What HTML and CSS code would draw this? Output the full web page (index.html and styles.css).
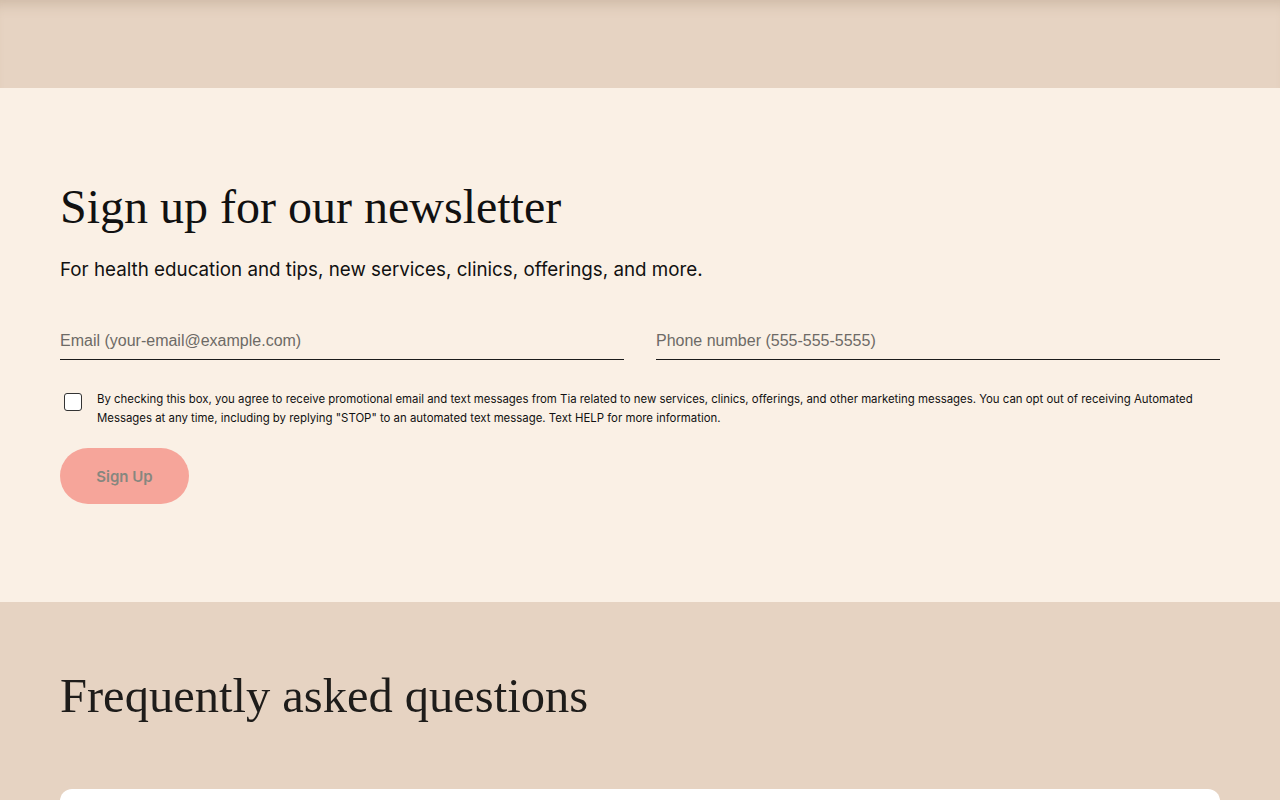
FILE: index.html
```html
<!DOCTYPE html>
<html lang="en">
<head>
    <meta charset="UTF-8">
    <meta name="viewport" content="width=device-width, initial-scale=1.0">
    <title>Newsletter</title>
    <link rel="stylesheet" href="styles.css">
</head>
<body>
    <div class="top-band"></div>

    <section class="newsletter">
        <h2 class="title">Sign up for our newsletter</h2>
        <p class="lede">For health education and tips, new services, clinics, offerings, and more.</p>
        <form class="signup-form">
            <div class="fields">
                <input class="field" type="email" placeholder="Email (your-email@example.com)">
                <input class="field" type="tel" placeholder="Phone number (555-555-5555)">
            </div>
            <label class="consent">
                <input class="consent-box" type="checkbox">
                <span>By checking this box, you agree to receive promotional email and text messages from Tia related to new services, clinics, offerings, and other marketing messages. You can opt out of receiving Automated Messages at any time, including by replying "STOP" to an automated text message. Text HELP for more information.</span>
            </label>
            <button class="signup-btn" type="button" disabled>Sign Up</button>
        </form>
    </section>

    <section class="faq">
        <h2 class="title title-faq">Frequently asked questions</h2>
        <div class="faq-card"></div>
    </section>
</body>
</html>
```

FILE: styles.css
```css
body {
    margin: 0;
    background-color: #e6d3c2;
    font-family: "Inter", "Liberation Sans", sans-serif;
    color: #1b1b1b;
}

.top-band {
    height: 88px;
    background-color: #e6d3c2;
    box-shadow: inset 0 14px 14px -10px rgba(120, 90, 60, 0.22);
}

.newsletter {
    background-color: #faf0e5;
    padding: 91px 60px 98px;
}

.title {
    margin: 0;
    font-family: "Liberation Serif", serif;
    font-weight: 400;
    font-size: 48px;
    line-height: 56px;
    color: #111;
}

.title-faq {
    font-size: 48.5px;
    color: #1e1c1a;
}

.lede {
    margin: 21px 0 0;
    font-size: 18.8px;
    line-height: 28px;
    color: #111;
}

.signup-form {
    margin-top: 47px;
}

.fields {
    display: grid;
    grid-template-columns: 1fr 1fr;
    gap: 32px;
}

.field {
    border: none;
    border-bottom: 1px solid #1b1b1b;
    background: transparent;
    padding: 0 0 8px;
    font-family: "Liberation Sans", sans-serif;
    font-size: 16px;
    line-height: 20px;
    outline: none;
}

.field::placeholder {
    color: #6d6a66;
}

.consent {
    display: flex;
    align-items: flex-start;
    gap: 15px;
    margin-top: 30px;
    padding-left: 4px;
    font-size: 11.4px;
    line-height: 19px;
    color: #111;
}

.consent-box {
    appearance: none;
    flex: none;
    width: 18px;
    height: 18px;
    margin: 3px 0 0;
    border: 1px solid #333;
    border-radius: 3px;
    background: #fff;
}

.signup-btn {
    margin-top: 20px;
    width: 129px;
    height: 56px;
    border: none;
    border-radius: 28px;
    background-color: #f6a59a;
    color: #86877f;
    font-family: inherit;
    font-size: 15px;
    font-weight: 600;
}

.faq {
    padding: 66px 60px 0;
}

.faq-card {
    margin-top: 65px;
    height: 40px;
    background: #fff;
    border-radius: 12px 12px 0 0;
}
```
